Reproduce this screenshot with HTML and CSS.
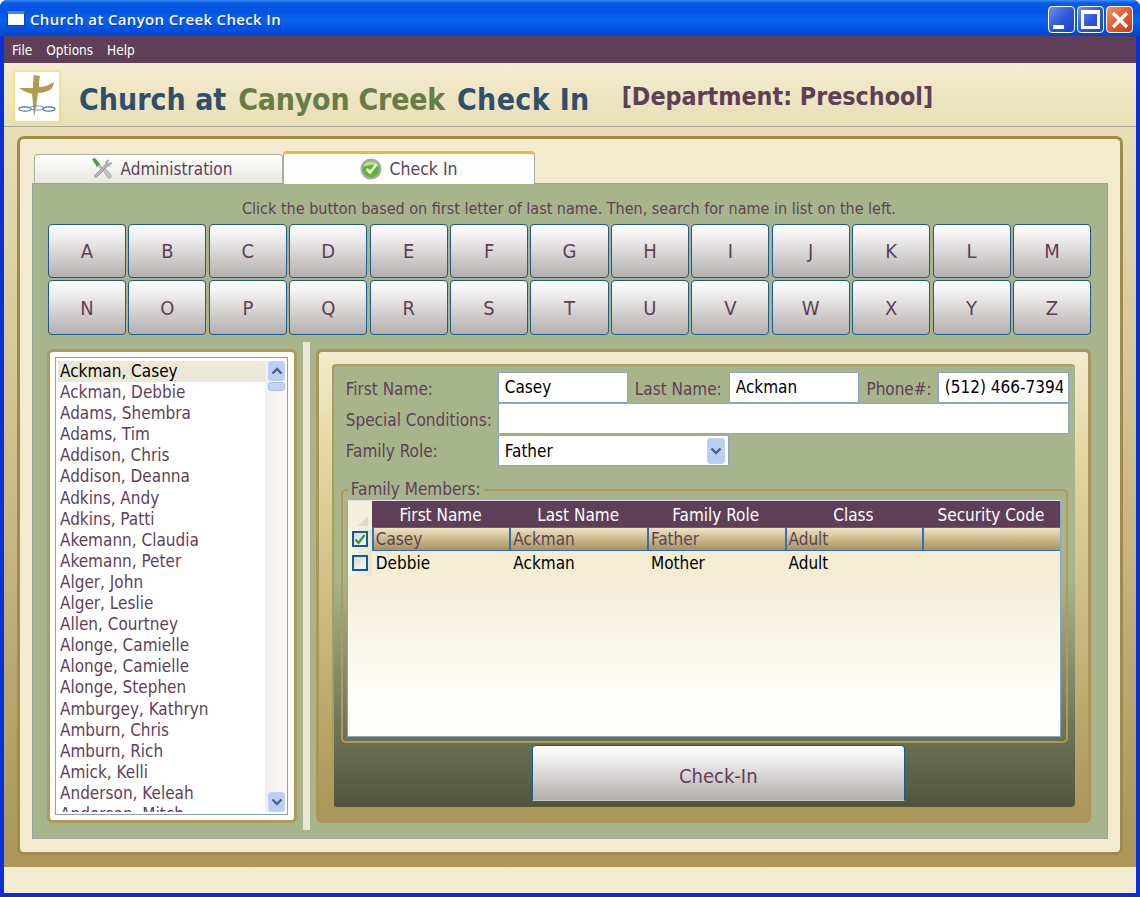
FILE: index.html
```html
<!DOCTYPE html>
<html>
    <head>
        <meta charset="utf-8">
        <title>Church at Canyon Creek Check In</title>
        <link rel="stylesheet" href="styles.css">
    </head>
    <body>
        <div class="window">
            <div class="titlebar">
                <span class="app-icon"></span>
                <span class="title-text">Church at Canyon Creek Check In</span>
                <span class="win-btn win-min"><span></span></span>
                <span class="win-btn win-max"><span></span></span>
                <span class="win-btn win-close">
                    <svg width="22" height="22" viewBox="0 0 22 22"><path d="M4 4 L18 18 M18 4 L4 18" stroke="#fff" stroke-width="3.4" fill="none"/></svg>
                </span>
            </div>
            <div class="client">
                <div class="menu">
                    <span>File</span>
                    <span>Options</span>
                    <span>Help</span>
                </div>
                <div class="header">
                    <div class="logo">
                        <svg width="40" height="44" viewBox="0 0 40 44">
                            <path d="M17 0 L23 1 C22 5 22 9 22 12 C27 12 32 10 37 7 C36 11 35 14 33 15 C29 17 25 18 21 18 C20 26 19 34 17 42 C16 34 16 26 15 19 C11 18 6 16 2 13 C7 13 12 13 16 13 C16 9 16 5 17 0 Z" fill="#b09c55"/>
                            <ellipse cx="8" cy="34" rx="6" ry="2.2" fill="none" stroke="#4a74b0" stroke-width="1.2"/>
                            <ellipse cx="20" cy="33" rx="7" ry="2" fill="none" stroke="#6f92c4" stroke-width="1"/>
                            <ellipse cx="32" cy="34" rx="6" ry="2.2" fill="none" stroke="#4a74b0" stroke-width="1.2"/>
                        </svg>
                    </div>
                    <h1 class="app-name">
                        <span class="blue">Church at</span>
                        <span class="green">Canyon Creek</span>
                        <span class="blue last-word">Check In</span>
                    </h1>
                    <div class="department">[Department: Preschool]</div>
                </div>
                <div class="main">
                    <div class="panel">
                        <div class="tabs">
                            <div class="tab tab-admin">
                                <svg width="22" height="22" viewBox="0 0 22 22">
                                    <path d="M18 2 C16 2 14 4 15 6 L3 18 L5 20 L17 8 C19 8 21 6 20 4 L18 6 L16 5 Z" fill="#b4b4b0" stroke="#8a8a86" stroke-width="0.6"/>
                                    <path d="M3 2 L5 2 L12 10 L10 12 Z" fill="#b4b4b0"/>
                                    <path d="M1 1 L4 0 L9 6 L6 9 Z" fill="#4f9a3c"/>
                                    <path d="M12 12 L14 10 L20 17 C21 19 19 21 17 20 Z" fill="#c4c4c0" stroke="#8a8a86" stroke-width="0.6"/>
                                </svg>
                                <span>Administration</span>
                            </div>
                            <div class="tab tab-active">
                                <svg width="22" height="22" viewBox="0 0 22 22">
                                    <circle cx="11" cy="11" r="10.5" fill="#a8a8a4"/>
                                    <circle cx="11" cy="11" r="8.2" fill="#62b32c"/>
                                    <path d="M3.5 9 A8 8 0 0 1 18.5 8 C14 6 8 7 3.5 9 Z" fill="#b8e088"/>
                                    <path d="M6.5 11 L10 14.5 L16.5 6.5" fill="none" stroke="#f2f5ee" stroke-width="2.6"/>
                                </svg>
                                <span>Check In</span>
                            </div>
                        </div>
                        <div class="tab-body">
                            <p class="hint">Click the button based on first letter of last name. Then, search for name in list on the left.</p>
                            <div class="letters">
                                <button>A</button><button>B</button><button>C</button><button>D</button><button>E</button><button>F</button><button>G</button><button>H</button><button>I</button><button>J</button><button>K</button><button>L</button><button>M</button>
                                <button>N</button><button>O</button><button>P</button><button>Q</button><button>R</button><button>S</button><button>T</button><button>U</button><button>V</button><button>W</button><button>X</button><button>Y</button><button>Z</button>
                            </div>
                            <div class="lower">
                                <div class="list-card">
                                    <div class="listbox">
                                        <div class="names">
                                            <div class="name selected">Ackman, Casey</div>
                                            <div class="name">Ackman, Debbie</div>
                                            <div class="name">Adams, Shembra</div>
                                            <div class="name">Adams, Tim</div>
                                            <div class="name">Addison, Chris</div>
                                            <div class="name">Addison, Deanna</div>
                                            <div class="name">Adkins, Andy</div>
                                            <div class="name">Adkins, Patti</div>
                                            <div class="name">Akemann, Claudia</div>
                                            <div class="name">Akemann, Peter</div>
                                            <div class="name">Alger, John</div>
                                            <div class="name">Alger, Leslie</div>
                                            <div class="name">Allen, Courtney</div>
                                            <div class="name">Alonge, Camielle</div>
                                            <div class="name">Alonge, Camielle</div>
                                            <div class="name">Alonge, Stephen</div>
                                            <div class="name">Amburgey, Kathryn</div>
                                            <div class="name">Amburn, Chris</div>
                                            <div class="name">Amburn, Rich</div>
                                            <div class="name">Amick, Kelli</div>
                                            <div class="name">Anderson, Keleah</div>
                                            <div class="name">Anderson, Mitch</div>
                                        </div>
                                        <div class="scrollbar">
                                            <span class="scroll-btn">
                                                <svg width="12" height="8" viewBox="0 0 12 8"><path d="M1.5 6.5 L6 2 L10.5 6.5" fill="none" stroke="#4d6185" stroke-width="2.4"/></svg>
                                            </span>
                                            <span class="scroll-thumb"></span>
                                            <span class="scroll-btn scroll-down">
                                                <svg width="12" height="8" viewBox="0 0 12 8"><path d="M1.5 1.5 L6 6 L10.5 1.5" fill="none" stroke="#4d6185" stroke-width="2.4"/></svg>
                                            </span>
                                        </div>
                                    </div>
                                </div>
                                <div class="splitter"></div>
                                <div class="detail-card">
                                    <div class="detail">
                                        <div class="form-row">
                                            <label class="label-first">First Name:</label>
                                            <input class="field field-name" value="Casey">
                                            <label class="label-last">Last Name:</label>
                                            <input class="field field-name" value="Ackman">
                                            <label class="label-phone">Phone#:</label>
                                            <input class="field field-phone" value="(512) 466-7394">
                                        </div>
                                        <div class="form-row">
                                            <label class="label-first">Special Conditions:</label>
                                            <input class="field field-wide" value="">
                                        </div>
                                        <div class="form-row">
                                            <label class="label-first">Family Role:</label>
                                            <div class="field field-select">
                                                <span>Father</span>
                                                <span class="scroll-btn select-btn">
                                                    <svg width="12" height="8" viewBox="0 0 12 8"><path d="M1.5 1.5 L6 6 L10.5 1.5" fill="none" stroke="#4d6185" stroke-width="2.4"/></svg>
                                                </span>
                                            </div>
                                        </div>
                                        <fieldset class="family">
                                            <legend>Family Members:</legend>
                                            <div class="members">
                                                <div class="members-row members-head">
                                                    <div class="corner"><span></span></div>
                                                    <div class="cell">First Name</div>
                                                    <div class="cell">Last Name</div>
                                                    <div class="cell">Family Role</div>
                                                    <div class="cell">Class</div>
                                                    <div class="cell">Security Code</div>
                                                </div>
                                                <div class="members-row member-selected">
                                                    <div class="row-head">
                                                        <span class="check">
                                                            <svg width="12" height="12" viewBox="0 0 12 12"><path d="M1.5 6.5 L4.5 10 L10.5 2" fill="none" stroke="#21a32a" stroke-width="2.2"/></svg>
                                                        </span>
                                                    </div>
                                                    <div class="cell">Casey</div>
                                                    <div class="cell">Ackman</div>
                                                    <div class="cell">Father</div>
                                                    <div class="cell">Adult</div>
                                                    <div class="cell"></div>
                                                </div>
                                                <div class="members-row member">
                                                    <div class="row-head"><span class="check"></span></div>
                                                    <div class="cell">Debbie</div>
                                                    <div class="cell">Ackman</div>
                                                    <div class="cell">Mother</div>
                                                    <div class="cell">Adult</div>
                                                    <div class="cell"></div>
                                                </div>
                                            </div>
                                        </fieldset>
                                        <button class="check-in">Check-In</button>
                                    </div>
                                </div>
                            </div>
                        </div>
                    </div>
                </div>
                <div class="status"></div>
            </div>
        </div>
    </body>
</html>
```

FILE: styles.css
```css
* {
    padding: 0;
    margin: 0;
    box-sizing: border-box;
}

body {
    font-family: "DejaVu Sans", sans-serif;
    font-stretch: condensed;
    color: #5f3f58;
    overflow: hidden;
}

.window {
    width: 1140px;
    height: 897px;
    display: flex;
    flex-direction: column;
    background-color: #0831d9;
    border-radius: 7px 7px 0 0;
    overflow: hidden;
}

.titlebar {
    height: 36px;
    flex-shrink: 0;
    display: flex;
    align-items: center;
    padding: 0 7px 0 7px;
    background: linear-gradient(#3c8cf5 0, #0a5ae6 3px, #0453e4 12px, #0a62f0 20px, #0050dc 30px, #0046c8 36px);
}

.app-icon {
    width: 18px;
    height: 15px;
    background-color: #fff;
    border: 1px solid #1c3f8f;
    border-top: 3px solid #4f82d8;
}

.title-text {
    flex: 1;
    margin-left: 5px;
    margin-top: 1px;
    color: #fff;
    font-family: "Open Sans", sans-serif;
    font-stretch: normal;
    font-size: 15px;
    font-weight: 600;
    letter-spacing: 0.35px;
    text-shadow: 1px 1px 0 #0a3aa0;
}

.win-btn {
    width: 27px;
    height: 27px;
    margin-left: 2px;
    margin-top: 3px;
    border: 1px solid #fff;
    border-radius: 4px;
    background: linear-gradient(135deg, #6f90ea, #2a55d8 55%, #1f46c8);
    display: flex;
}

.win-min span {
    width: 11px;
    height: 4px;
    background-color: #fff;
    margin: 18px 0 0 4px;
}

.win-max span {
    width: 19px;
    height: 19px;
    border: 3px solid #fff;
    border-top-width: 4px;
    margin: 3px 0 0 3px;
}

.win-close {
    background: linear-gradient(135deg, #ec9274, #e2582c 55%, #c83c14);
    align-items: center;
    justify-content: center;
}

.client {
    flex: 1;
    min-height: 0;
    margin: 0 4px 4px;
    display: flex;
    flex-direction: column;
    background-color: #f3ebcf;
}

.menu {
    height: 27px;
    flex-shrink: 0;
    display: flex;
    align-items: center;
    gap: 14px;
    padding-left: 8px;
    background-color: #5f3f58;
    color: #fff;
    font-size: 13.5px;
}

.header {
    height: 64px;
    flex-shrink: 0;
    display: flex;
    align-items: center;
    padding-left: 11px;
    border-bottom: 1px solid #aeaa9c;
    background: linear-gradient(#f4ecd0, #e8dfb6);
}

.logo {
    width: 44px;
    height: 49px;
    margin-top: 4px;
    background-color: #fff;
    box-shadow: 0 0 3px 1px #f5dc64;
    display: flex;
    align-items: center;
    justify-content: center;
}

.app-name {
    margin-left: 20px;
    display: flex;
    gap: 12px;
    font-size: 30px;
    font-weight: 700;
    padding-top: 9px;
}

.blue {
    color: #2f4f6b;
}

.green {
    color: #697c45;
    letter-spacing: -0.25px;
}

.last-word {
    letter-spacing: 0.35px;
}

.department {
    margin-left: 32px;
    margin-top: 4px;
    font-size: 24.8px;
    font-weight: 700;
    color: #5f3f58;
}

.main {
    flex: 1;
    min-height: 0;
    padding: 9px 13px 12px;
    background: linear-gradient(#e8dfb6, #ab9558);
}

.panel {
    height: 719px;
    border: 3px solid #a08a4c;
    border-radius: 7px;
    background-color: #f3ebcf;
    padding: 12px 12px 13px;
    display: flex;
    flex-direction: column;
}

.tabs {
    height: 32px;
    flex-shrink: 0;
    display: flex;
    align-items: flex-end;
    padding-left: 2px;
}

.tab {
    display: flex;
    align-items: center;
    justify-content: center;
    gap: 7px;
    font-size: 17.5px;
    padding-bottom: 1px;
}

.tab-admin {
    width: 249px;
    height: 29px;
    font-size: 17px;
    gap: 8px;
    padding-left: 6px;
    border: 1px solid #a9aca0;
    border-bottom: none;
    border-radius: 4px 4px 0 0;
    background: linear-gradient(#fff, #e8e7e0);
}

.tab-active {
    width: 252px;
    height: 33px;
    margin-bottom: -1px;
    border: 1px solid #a9aca0;
    border-top: 3px solid #f5b53c;
    border-bottom: none;
    border-radius: 4px 4px 0 0;
    background-color: #fdfdfd;
    position: relative;
    z-index: 1;
}

.tab-body {
    flex: 1;
    min-height: 0;
    background-color: #a8b58c;
    border: 1px solid #9aa3a0;
    padding: 15px 16px 8px 14px;
    display: flex;
    flex-direction: column;
}

.hint {
    height: 25px;
    flex-shrink: 0;
    text-align: center;
    font-size: 16px;
    line-height: 19px;
    color: #5f3f58;
}

.letters {
    flex-shrink: 0;
    display: grid;
    grid-template-columns: repeat(13, 1fr);
    grid-template-rows: 54px 55px;
    gap: 2px 2.4px;
    padding-left: 1px;
}

button {
    font-family: inherit;
    font-stretch: condensed;
    font-size: 20px;
    color: #5f3f58;
    border: 1px solid #1c5a8a;
    border-radius: 4px;
    background: linear-gradient(#fff 0, #f6f5f5 15%, #b5afaf 100%);
    cursor: pointer;
}

.lower {
    flex: 1;
    min-height: 0;
    display: flex;
    margin-top: 7px;
}

.list-card {
    width: 250px;
    margin: 7px 0;
    padding: 5px;
    background-color: #fff;
    border: 3px solid #b09a55;
    border-radius: 6px;
    overflow: hidden;
}

.listbox {
    height: 100%;
    width: 233px;
    border: 1px solid #8aa0bc;
    padding: 3px 0 2px 2px;
    display: flex;
    overflow: hidden;
}

.names {
    flex: 1;
    overflow: hidden;
}

.name {
    height: 21.1px;
    line-height: 20px;
    padding-left: 2px;
    font-size: 17px;
    white-space: nowrap;
}

.selected {
    background-color: #ece8d8;
    color: #000;
}

.scrollbar {
    width: 22px;
    padding: 0 2px 0 3px;
    background: linear-gradient(90deg, #f1efec, #fcfbfa);
    display: flex;
    flex-direction: column;
    gap: 1px;
}

.scroll-btn {
    height: 20px;
    border: 1px solid #c4d2f2;
    border-radius: 3px;
    background-color: #bccdf6;
    display: flex;
    align-items: center;
    justify-content: center;
}

.scroll-thumb {
    height: 9px;
    border: 1px solid #a7bde8;
    border-radius: 3px;
    background-color: #c3d2f6;
}

.scroll-down {
    margin-top: auto;
}

.splitter {
    width: 7px;
    margin-left: 6px;
    background-color: #ebe6d8;
}

.detail-card {
    width: 776px;
    margin: 7px 0 7px 6px;
    padding: 12px 13px 13px;
    border: 3px solid #ab9558;
    border-radius: 6px;
    background: linear-gradient(#f3ebcf, #e4d7a2 22%, #ab9558);
}

.detail {
    height: 100%;
    padding: 6px 0 0 12px;
    border: 2px solid #b09a55;
    border-bottom: none;
    border-right: none;
    border-radius: 4px;
    background: linear-gradient(#a8b58c 0, #a8b58c 48%, #50543c 100%);
    display: flex;
    flex-direction: column;
}

.form-row {
    display: flex;
    align-items: center;
    height: 31px;
    font-size: 17px;
    flex-shrink: 0;
}

.form-row label {
    padding-top: 3px;
}

.label-first {
    width: 152px;
    white-space: nowrap;
}

.label-last {
    width: 101px;
    text-align: right;
    padding-right: 7px;
    white-space: nowrap;
}

.label-phone {
    width: 79px;
    text-align: right;
    padding-right: 6px;
    white-space: nowrap;
}

.field {
    height: 31px;
    border: 1px solid #8aa5c5;
    background-color: #fff;
    color: #000;
    font-family: inherit;
    font-stretch: condensed;
    font-size: 17px;
    padding: 0 5px 1px 6px;
}

.field-name {
    width: 130px;
}

.field-phone {
    width: 131px;
}

.field-wide {
    width: 571px;
}

.field-select {
    width: 231px;
    display: flex;
    align-items: center;
    justify-content: space-between;
    padding: 2px 3px 1px 6px;
    margin-top: 1px;
}

.select-btn {
    width: 18px;
    height: 26px;
}

.family {
    width: 727px;
    height: 262px;
    margin: 16px 0 0 -5px;
    padding: 0 5px 4px 4px;
    border: 2px solid #b09a55;
    border-radius: 5px;
    flex-shrink: 0;
}

.family legend {
    margin-left: 1px;
    padding: 0 3px;
    font-size: 17px;
    line-height: 17px;
}

.members {
    height: 237px;
    margin-top: 2px;
    border: 1px solid #8aa5c5;
    border-top-color: #dde;
    background: linear-gradient(#f3ebcf, #f5efdb 40%, #fffefb 85%);
}

.members-row {
    display: grid;
    grid-template-columns: 24px repeat(5, 137.6px);
    align-items: stretch;
}

.members-head {
    height: 26px;
    background-color: #5f3f58;
    color: #fff;
    font-size: 17px;
    line-height: 28px;
    text-align: center;
}

.members-head .corner {
    background-color: #f5f0dc;
    position: relative;
}

.corner span {
    position: absolute;
    right: 4px;
    bottom: 3px;
    width: 0;
    height: 0;
    border-left: 10px solid transparent;
    border-bottom: 10px solid #d8d8ce;
}

.member-selected {
    height: 23px;
    font-size: 17px;
    line-height: 22px;
}

.member-selected .cell {
    border: 1px solid #2f6fc0;
    border-left-width: 2px;
    border-right: none;
    padding-left: 2px;
    background: linear-gradient(#efe4c0, #a8925a);
}

.member-selected .row-head {
    background-color: #f8f6ea;
}

.member {
    height: 25px;
    font-size: 17px;
    line-height: 26px;
    color: #000;
    background-color: #f4edd4;
}

.member .cell {
    padding-left: 4px;
}

.row-head {
    display: flex;
    align-items: center;
    padding-left: 4px;
    background: linear-gradient(90deg, #f8f6ea, #e8e4d4);
}

.check {
    width: 16px;
    height: 16px;
    border: 2px solid #1c5a8a;
    background: linear-gradient(135deg, #d8d8de, #fafafa);
    display: flex;
    align-items: center;
    justify-content: center;
}

.check-in {
    width: 373px;
    height: 56px;
    margin: 2px 0 0 186px;
    padding-top: 5px;
    border-bottom-color: #c8c8c4;
    border-radius: 4px 4px 0 0;
    flex-shrink: 0;
}

.status {
    height: 26px;
    flex-shrink: 0;
    background-color: #f3ebcf;
}
```
